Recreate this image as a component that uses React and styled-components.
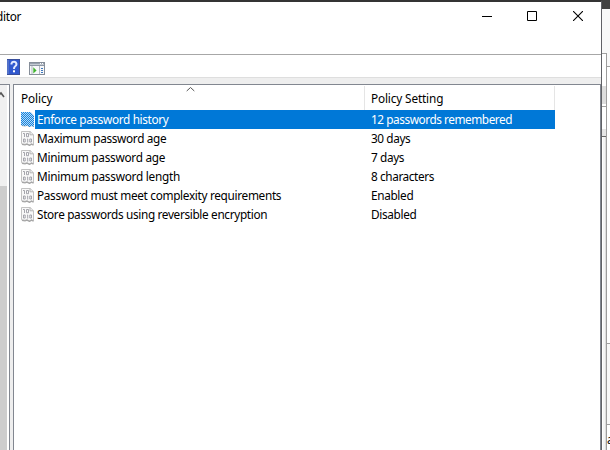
import React from "react";
import styled, { createGlobalStyle } from "styled-components";

const Global = createGlobalStyle`
  * { box-sizing: border-box; }
  body { margin: 0; overflow: hidden; background: #fff; font: 11.8px/19px "Noto Sans", "Open Sans", sans-serif; color: #000; }
  svg { display: block; flex: none; }
`;
const Desktop = styled.div`
  display: grid; grid-template-columns: 602px 8px; width: 610px; height: 450px; overflow: hidden;
`;
const Window = styled.main`
  display: flex; flex-direction: column; height: 450px; background: #fff;
  border-top: 2px solid #343434; border-right: 1px solid #606166;
`;
const TitleBar = styled.header`
  display: flex; align-items: flex-start; justify-content: space-between;
  height: 53px; flex: none; border-bottom: 1px solid #a7a7a7;
`;
const Title = styled.div`
  height: 28px; line-height: 28px; margin-left: -4px; white-space: nowrap; letter-spacing: -0.3px;
`;
const Controls = styled.div`display: flex; height: 28px;`;
const Control = styled.button`
  display: grid; place-items: center; width: ${p => p.$w}px; height: 28px; padding: 0; border: 0; background: transparent;
`;
const Toolbar = styled.div`
  display: flex; gap: 9px; height: 23px; flex: none; padding: 4px 0 0 7px; border-bottom: 1px solid #dedede;
`;
const ConsoleSvg = styled.svg`margin-top: 3px;`;
const Workspace = styled.div`
  display: grid; grid-template-columns: 10px 588px; gap: 3px; flex: 1; padding-top: 6px; background: #eee;
`;
const TreePane = styled.div`
  display: flex; flex-direction: column; border-top: 1px solid #828790; border-right: 1px solid #828790; background: #fff;
`;
const ScrollTrack = styled.div`
  display: flex; flex-direction: column; justify-content: space-between; width: 7px; height: 365px; background: #f0f0f0;
`;
const Thumb = styled.div`height: 264px; background: #cdcdcd;`;
const ListPane = styled.section`
  border: 1px solid #828790; border-bottom: 0; background: #fff;
`;
const HeaderRow = styled.div`
  display: grid; grid-template-columns: 351px 190px; height: 25px; padding-top: 1px;
`;
const HeaderCell = styled.div`
  display: flex; justify-content: space-between; padding-left: ${p => p.$pad}px; border-right: 1px solid #e5e5e5;
  line-height: 24px; white-space: nowrap;
`;
const SortArrow = styled.svg`margin-right: 169px;`;
const Row = styled.div`
  display: grid; grid-template-columns: 21px 330px 190px; height: 19px;
  color: ${p => (p.$selected ? "#fff" : "#000")};
`;
const IconCell = styled.div`padding: 2px 0 0 7px;`;
const Cell = styled.div`
  padding-left: ${p => p.$pad}px; white-space: nowrap;
  background: ${p => (p.$selected ? "#0078d7" : "transparent")};
`;
const Label = styled.span`letter-spacing: ${p => p.$track || 0}px;`;
const Behind = styled.aside`display: flex; flex-direction: column; height: 450px; background: #fff;`;
const BehindTitle = styled.div`
  height: 53px; flex: none; border-top: 9px solid #414141; background: #f8f8f8;
`;
const BehindBody = styled.div`display: grid; grid-template-columns: 5px 3px; flex: 1;`;
const BehindPane = styled.div`border-top: 1px solid #a0a0a0; border-right: 1px solid #9c9c9c;`;
const Strip = styled.div`height: ${p => p.$h}px; background: ${p => p.$bg}; ${p => p.$line && `border-bottom: 1px solid ${p.$line};`}`;
const Track = styled.div`height: 313px; background: #f4f4f4; border-left: 1px solid #fff; border-right: 1px solid #ddd;`;
const Clipped = styled.div`width: 3px; overflow: hidden; line-height: 29px;`;

const HelpIcon = () => (
  <svg width="13" height="16" viewBox="0 0 13 16">
    <rect width="13" height="16" fill="#5271c8" />
    <rect x="2" y="1" width="10" height="14" fill="#3159cf" />
    <path d="M0 .5h13M12.5 0v16M0 15.5h13" stroke="#394f9b" />
    <path d="M4.5 5.5V4.5Q5 2.8 7 2.8t2.5 2.2q0 1.3-1.3 2.2T7 10" fill="none" stroke="#e5ebff" strokeWidth="2" />
    <rect x="6" y="11.3" width="2" height="2" fill="#fff" />
  </svg>
);
const ConsoleIcon = () => (
  <ConsoleSvg width="16" height="13" viewBox="0 0 16 13">
    <rect x=".5" y=".5" width="15" height="12" fill="#f7f8fa" stroke="#868e99" />
    <path d="M1 1.5h14" stroke="#98a1ae" />
    <path d="M1 2.5h14" stroke="#c5cbd3" />
    <path d="M1 3.5h14" stroke="#8e97a4" />
    <path d="M11 1.5h1m1 0h1" stroke="#fff" />
    <path d="M10.5 4v8M3 4v8" stroke="#b1b7c0" />
    <path d="M4.3 5.2 7.6 8.5l-3.3 3z" fill="#3fb42c" />
    <path d="M12 6.5h2m-2 2h2m-2 2h2" stroke="#3e78bd" />
  </ConsoleSvg>
);
const sheet = "M0 0h9.5L13 3.5V13l-.5 2-2-1-2 1-2.5-1.5-2 .5-4-.7z";
const PolicyIcon = ({ selected }) => (
  <svg width="14" height="15" viewBox="0 0 14 15">
    <path d="M.5.5h8.7l3.3 3.3v10l-2-1-2 1.2-2.5-1.3-2 .6-3.5-.6z" fill="#f8f8f8" stroke="#c3c3c3" />
    <path d="M9 .5v3.3h3.5" fill="none" stroke="#b4b4b4" />
    <path d="m1 13.3 3 .6 2-.7 2.5 1.2 2-1.2 2 1" fill="none" stroke="#a6a6a6" strokeWidth="1.3" />
    <path d="M2 2.5h1.5V6M5.5 2.5h2v3.2h-2zM2.5 8h1.7v3H2.5zM6 8h.7v3.5M8.8 8h1.7v3H8.8z" fill="none" stroke="#9c9ca4" strokeWidth=".9" />
    {selected && (
      <>
        <defs>
          <pattern id="dither" width="2" height="2" patternUnits="userSpaceOnUse">
            <rect width="2" height="2" fill="#b4daf8" />
            <rect width="1" height="1" fill="#1683dc" />
            <rect x="1" y="1" width="1" height="1" fill="#1683dc" />
          </pattern>
        </defs>
        <path d={sheet} fill="url(#dither)" />
      </>
    )}
  </svg>
);

const policies = [
  ["Enforce password history", -0.35, "12 passwords remembered", -0.44],
  ["Maximum password age", -0.34, "30 days", -0.4],
  ["Minimum password age", -0.27, "7 days", -0.38],
  ["Minimum password length", -0.25, "8 characters", -0.4],
  ["Password must meet complexity requirements", -0.32, "Enabled", -0.34],
  ["Store passwords using reversible encryption", -0.34, "Disabled", -0.34],
];

export default function App() {
  return (
    <Desktop>
      <Global />
      <Window>
        <TitleBar>
          <Title>ditor</Title>
          <Controls>
            <Control $w={44} aria-label="Minimize"><svg width="10" height="10"><path d="M0 5.5h10" stroke="#000" /></svg></Control>
            <Control $w={46} aria-label="Maximize"><svg width="10" height="10"><path d="M.5.5h9v9h-9z" fill="none" stroke="#000" /></svg></Control>
            <Control $w={46} aria-label="Close"><svg width="10" height="10"><path d="m0 0 10 10M10 0 0 10" stroke="#000" strokeWidth="1.1" /></svg></Control>
          </Controls>
        </TitleBar>
        <Toolbar><HelpIcon /><ConsoleIcon /></Toolbar>
        <Workspace>
          <TreePane>
            <ScrollTrack>
              <svg width="7" height="20"><path d="m-3 12 4-4 3 4" fill="none" stroke="#555" strokeWidth="1.6" /></svg>
              <Thumb />
            </ScrollTrack>
          </TreePane>
          <ListPane>
            <HeaderRow>
              <HeaderCell $pad={7}><Label $track={-0.1}>Policy</Label><SortArrow width="9" height="6"><path d="m.7 5 3.8-3.5L8.3 5" fill="none" stroke="#555" /></SortArrow></HeaderCell>
              <HeaderCell $pad={6}><Label $track={-0.15}>Policy Setting</Label></HeaderCell>
            </HeaderRow>
            {policies.map(([name, nameTrack, value, valueTrack], i) => (
              <Row key={name} $selected={i === 0}>
                <IconCell><PolicyIcon selected={i === 0} /></IconCell>
                <Cell $pad={2} $selected={i === 0}><Label $track={nameTrack}>{name}</Label></Cell>
                <Cell $pad={6} $selected={i === 0}><Label $track={valueTrack}>{value}</Label></Cell>
              </Row>
            ))}
          </ListPane>
        </Workspace>
      </Window>
      <Behind>
        <BehindTitle />
        <BehindBody>
          <BehindPane>
            <Strip $h={32} $bg="#fff" />
            <Strip $h={18} $bg="#ddd" />
            <Strip $h={3} $bg="#fff" $line="#a0a0a0" />
            <Strip $h={22} $bg="#fff" />
            <Strip $h={8} $bg="#e5e5e5" $line="#666" />
            <Track />
          </BehindPane>
          <div>
            <Strip $h={14} $bg="#f8f8f8" $line="#a0a0a0" />
            <Strip $h={277} $bg="#fff" $line="#a0a0a0" />
            <Strip $h={81} $bg="#f8f8f8" $line="#a0a0a0" />
            <Clipped>a</Clipped>
          </div>
        </BehindBody>
      </Behind>
    </Desktop>
  );
}
